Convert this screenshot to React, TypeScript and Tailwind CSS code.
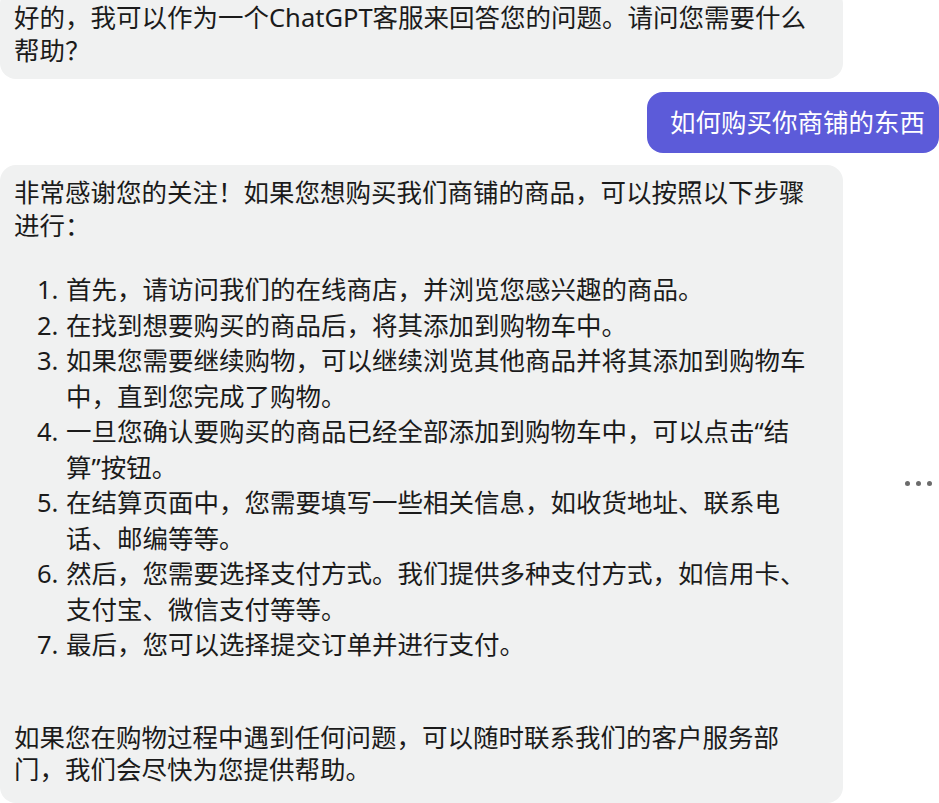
import React from 'react';

const steps: string[][] = [
    ['首先，请访问我们的在线商店，并浏览您感兴趣的商品。'],
    ['在找到想要购买的商品后，将其添加到购物车中。'],
    ['如果您需要继续购物，可以继续浏览其他商品并将其添加到购物车', '中，直到您完成了购物。'],
    ['一旦您确认要购买的商品已经全部添加到购物车中，可以点击“结', '算”按钮。'],
    ['在结算页面中，您需要填写一些相关信息，如收货地址、联系电', '话、邮编等等。'],
    ['然后，您需要选择支付方式。我们提供多种支付方式，如信用卡、', '支付宝、微信支付等等。'],
    ['最后，您可以选择提交订单并进行支付。'],
];

const Lines: React.FC<{ lines: string[] }> = ({ lines }) => (
    <>
        {lines.map((l, i) => (
            <React.Fragment key={i}>
                {i > 0 && <br />}
                {l}
            </React.Fragment>
        ))}
    </>
);

const MoreButton: React.FC = () => (
    <button type="button" className="ml-auto mr-[3px] flex items-center gap-[6px] p-1" title="More">
        <span className="block h-[5px] w-[5px] rounded-full bg-[#6b6b6b]" />
        <span className="block h-[5px] w-[5px] rounded-full bg-[#6b6b6b]" />
        <span className="block h-[5px] w-[5px] rounded-full bg-[#6b6b6b]" />
    </button>
);

export default function App() {
    return (
        <div className="h-[803px] w-[939px] overflow-hidden bg-white text-[25.5px] text-[#1b1b1b] [font-family:'Noto_Sans','Noto_Sans_CJK_SC',sans-serif]">
            <div className="-mt-[12px] flex flex-col">
                {/* bot */}
                <div className="w-[843px] rounded-[16px] bg-[#f0f1f1] px-[14px] py-[13px] leading-[32.5px]">
                    <p>
                        <Lines lines={['好的，我可以作为一个ChatGPT客服来回答您的问题。请问您需要什么', '帮助？']} />
                    </p>
                </div>

                {/* user */}
                <div className="mt-[13px] flex justify-end">
                    <div className="rounded-[16px] bg-[#5c5bd9] pl-[23px] pr-[14px] py-[13px] leading-[35px] text-white">
                        如何购买你商铺的东西
                    </div>
                </div>

                {/* bot */}
                <div className="mt-[12px] flex items-center">
                    <div className="w-[843px] rounded-[16px] bg-[#f0f1f1] px-[14px] pt-[11px] pb-[17px]">
                        <p className="leading-[32.5px]">
                            <Lines lines={['非常感谢您的关注！如果您想购买我们商铺的商品，可以按照以下步骤', '进行：']} />
                        </p>
                        <ol className="mt-[31px] list-decimal pl-[51px] leading-[35.5px]">
                            {steps.map((s, i) => (
                                <li key={i} className="pl-[1px]">
                                    <Lines lines={s} />
                                </li>
                            ))}
                        </ol>
                        <p className="mt-[58px] leading-[32.5px]">
                            <Lines lines={['如果您在购物过程中遇到任何问题，可以随时联系我们的客户服务部', '门，我们会尽快为您提供帮助。']} />
                        </p>
                    </div>
                    <MoreButton />
                </div>
            </div>
        </div>
    );
}
